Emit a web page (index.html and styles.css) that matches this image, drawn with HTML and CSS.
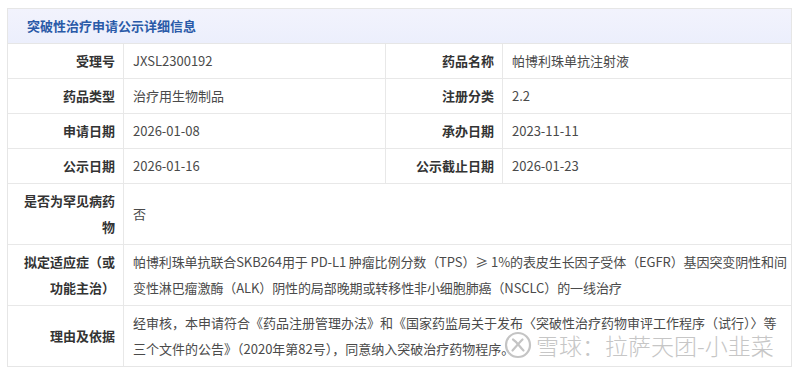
FILE: index.html
```html
<!DOCTYPE html>
<html lang="zh-CN">
<head>
<meta charset="utf-8">
<title>突破性治疗申请公示详细信息</title>
<link rel="stylesheet" href="styles.css">
</head>
<body>
<div class="card">
  <div class="card-head">突破性治疗申请公示详细信息</div>
  <div class="grid">
    <div class="lbl">受理号</div>
    <div class="val">JXSL2300192</div>
    <div class="lbl">药品名称</div>
    <div class="val">帕博利珠单抗注射液</div>

    <div class="lbl">药品类型</div>
    <div class="val">治疗用生物制品</div>
    <div class="lbl">注册分类</div>
    <div class="val">2.2</div>

    <div class="lbl">申请日期</div>
    <div class="val">2026-01-08</div>
    <div class="lbl">承办日期</div>
    <div class="val">2023-11-11</div>

    <div class="lbl">公示日期</div>
    <div class="val">2026-01-16</div>
    <div class="lbl">公示截止日期</div>
    <div class="val">2026-01-23</div>

    <div class="lbl tall">是否为罕见病药物</div>
    <div class="val wide">否</div>

    <div class="lbl tall">拟定适应症（或功能主治）</div>
    <div class="val wide tight">帕博利珠单抗联合SKB264用于 PD-L1 肿瘤比例分数（TPS）≥ 1%的表皮生长因子受体（EGFR）基因突变阴性和间变性淋巴瘤激酶（ALK）阴性的局部晚期或转移性非小细胞肺癌（NSCLC）的一线治疗</div>

    <div class="lbl tall">理由及依据</div>
    <div class="val wide">经审核，本申请符合《药品注册管理办法》和《国家药监局关于发布〈突破性治疗药物审评工作程序（试行）〉等三个文件的公告》（2020年第82号），同意纳入突破治疗药物程序。</div>
  </div>
</div>
<div class="watermark">
  <svg class="wm-logo" viewBox="0 0 28 28" width="28" height="28" aria-hidden="true">
    <circle cx="14" cy="14" r="12" fill="none" stroke="#c4c4c4" stroke-width="2.2"/>
    <path d="M9 8.5 C13 11, 15 15, 19.5 19.5" fill="none" stroke="#c4c4c4" stroke-width="2.2" stroke-linecap="round"/>
    <path d="M18.5 8.5 C15.5 11.5, 12 15.5, 8.5 19.5" fill="none" stroke="#c4c4c4" stroke-width="2.2" stroke-linecap="round"/>
  </svg>
  <span class="wm-text">雪球：拉萨天团-小韭菜</span>
</div>
</body>
</html>
```
FILE: styles.css
```css
html, body {
  margin: 0;
  padding: 0;
  background: #ffffff;
}
body {
  font-family: "Noto Sans CJK SC", "Noto Sans", sans-serif;
  font-size: 13px;
  color: #444;
  position: relative;
  width: 800px;
  height: 369px;
  overflow: hidden;
}
.card {
  margin: 8px 8px 0 7px;
  border: 1px solid #e6e6e6;
  width: 783px;
}
.card-head {
  height: 34px;
  line-height: 34px;
  padding-left: 19px;
  background: linear-gradient(#f2f3fd, #eceffc);
  color: #2a5aa8;
  font-weight: bold;
  font-size: 13px;
  border-bottom: 1px solid #e6e6e6;
}
.grid {
  display: grid;
  grid-template-columns: 115px 261px 116px 1fr;
  gap: 1px;
  background: #e8e8e8;
}
.lbl, .val {
  background: #fff;
  line-height: 26px;
  padding: 4px 0;
  min-height: 26px;
}
.lbl {
  text-align: right;
  padding-right: 8px;
  font-weight: bold;
  color: #333;
}
.val {
  padding-left: 9px;
  color: #4a4a4a;
}
.wide {
  grid-column: 2 / 5;
  display: flex;
  align-items: center;
  padding-right: 12px;
}
.tight {
  padding-right: 0;
  letter-spacing: -0.1px;
}
.tall {
  padding-left: 6px;
  min-height: 51px;
  display: flex;
  align-items: center;
  justify-content: flex-end;
}
.watermark {
  position: absolute;
  left: 504px;
  top: 331px;
  display: flex;
  align-items: center;
  gap: 4px;
}
.wm-text {
  font-family: "Noto Sans CJK SC", sans-serif;
  font-size: 23px;
  font-weight: 300;
  color: #c6c6c6;
  line-height: 28px;
}
```
